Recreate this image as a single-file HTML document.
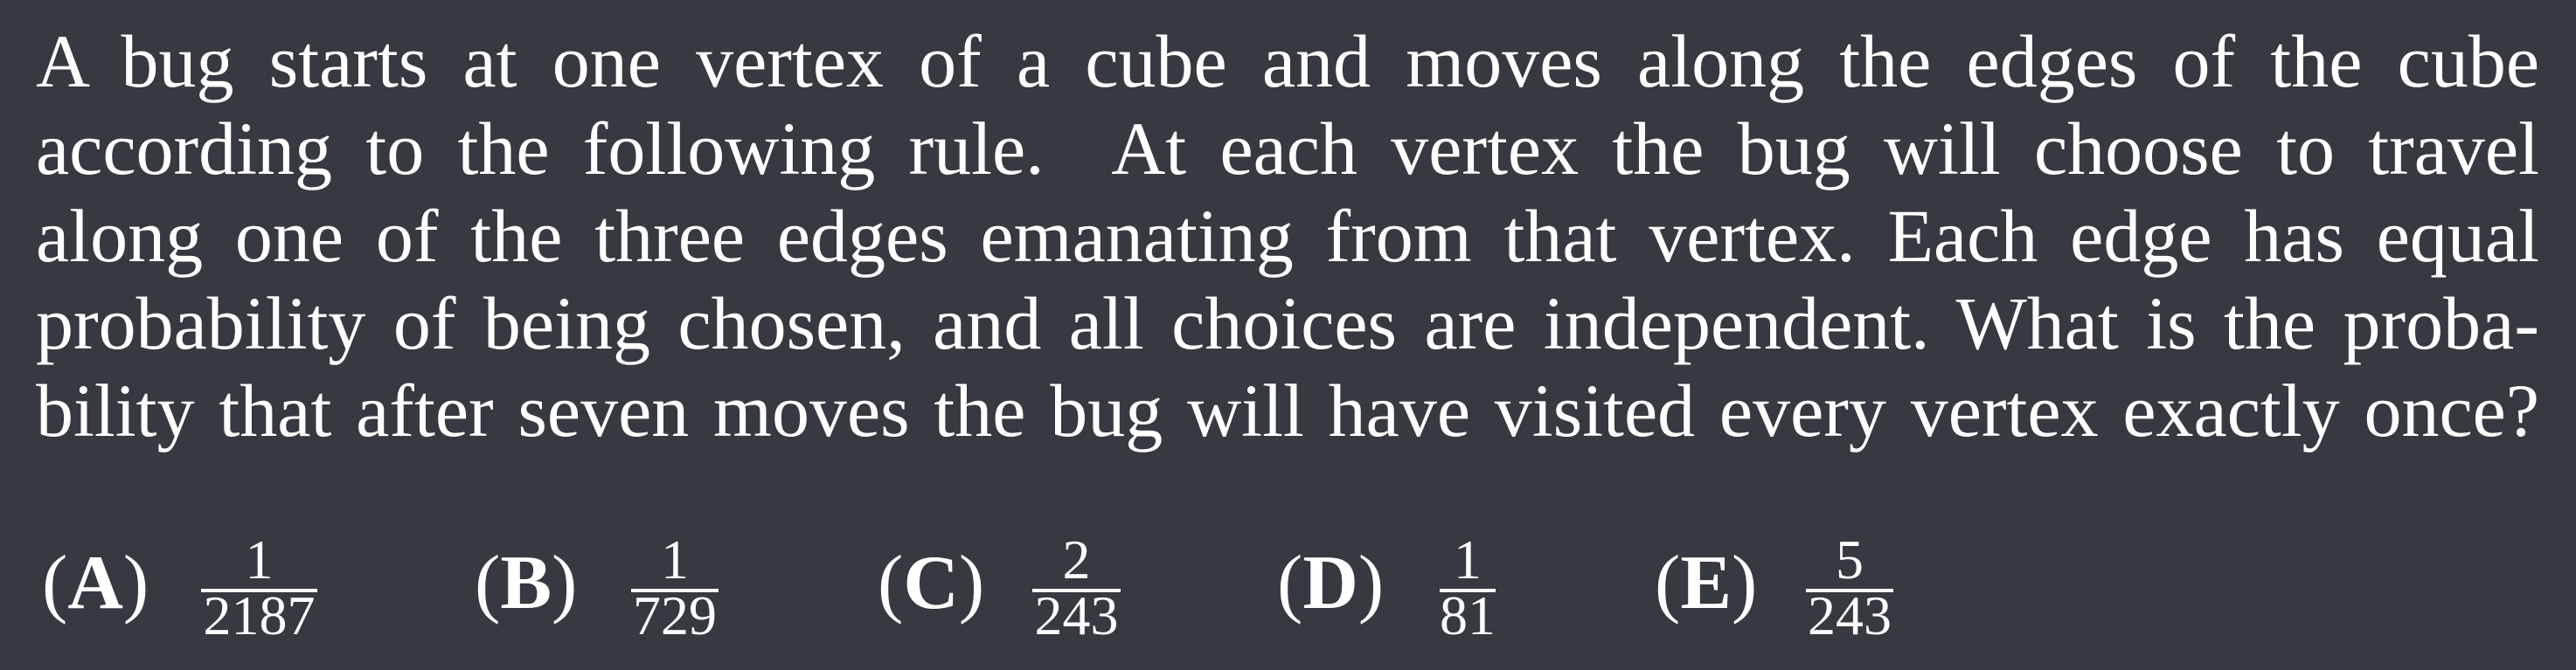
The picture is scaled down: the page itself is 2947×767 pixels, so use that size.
<!DOCTYPE html>
<html><head><meta charset="utf-8"><style>
html,body{margin:0;padding:0;}
body{width:2947px;height:767px;background:#36393f;color:#fff;font-family:"Liberation Serif",serif;position:relative;overflow:hidden;}
.p{position:absolute;left:41px;top:20px;width:2864px;font-size:86px;line-height:100px;}
.p div{text-align:justify;text-align-last:justify;}
.lab{position:absolute;top:618px;font-size:88px;line-height:100px;font-weight:bold;white-space:nowrap;}
.lab .pa{font-weight:normal;}
.bar{position:absolute;top:674px;height:4px;background:#fff;}
.n{position:absolute;font-size:64px;line-height:64px;text-align:center;}
</style></head><body>
<div class="p">
<div>A bug starts at one vertex of a cube and moves along the edges of the cube</div>
<div>according to the following rule. &nbsp;At each vertex the bug will choose to travel</div>
<div>along one of the three edges emanating from that vertex. Each edge has equal</div>
<div>probability of being chosen, and all choices are independent. What is the proba-</div>
<div>bility that after seven moves the bug will have visited every vertex exactly once?</div>
</div>

<div class="lab" style="left:48px"><span class="pa">(</span>A<span class="pa">)</span></div>
<div class="bar" style="left:230px;width:133px"></div>
<div class="n" style="left:230px;width:133px;top:609px">1</div>
<div class="n" style="left:230px;width:133px;top:673px">2187</div>

<div class="lab" style="left:543px"><span class="pa">(</span>B<span class="pa">)</span></div>
<div class="bar" style="left:722px;width:100px"></div>
<div class="n" style="left:722px;width:100px;top:609px">1</div>
<div class="n" style="left:722px;width:100px;top:673px">729</div>

<div class="lab" style="left:1004px"><span class="pa">(</span>C<span class="pa">)</span></div>
<div class="bar" style="left:1181px;width:101px"></div>
<div class="n" style="left:1181px;width:101px;top:609px">2</div>
<div class="n" style="left:1181px;width:101px;top:673px">243</div>

<div class="lab" style="left:1461px"><span class="pa">(</span>D<span class="pa">)</span></div>
<div class="bar" style="left:1647px;width:64px"></div>
<div class="n" style="left:1647px;width:64px;top:609px">1</div>
<div class="n" style="left:1647px;width:64px;top:673px">81</div>

<div class="lab" style="left:1893px"><span class="pa">(</span>E<span class="pa">)</span></div>
<div class="bar" style="left:2066px;width:100px"></div>
<div class="n" style="left:2066px;width:100px;top:609px">5</div>
<div class="n" style="left:2066px;width:100px;top:673px">243</div>
</body></html>
